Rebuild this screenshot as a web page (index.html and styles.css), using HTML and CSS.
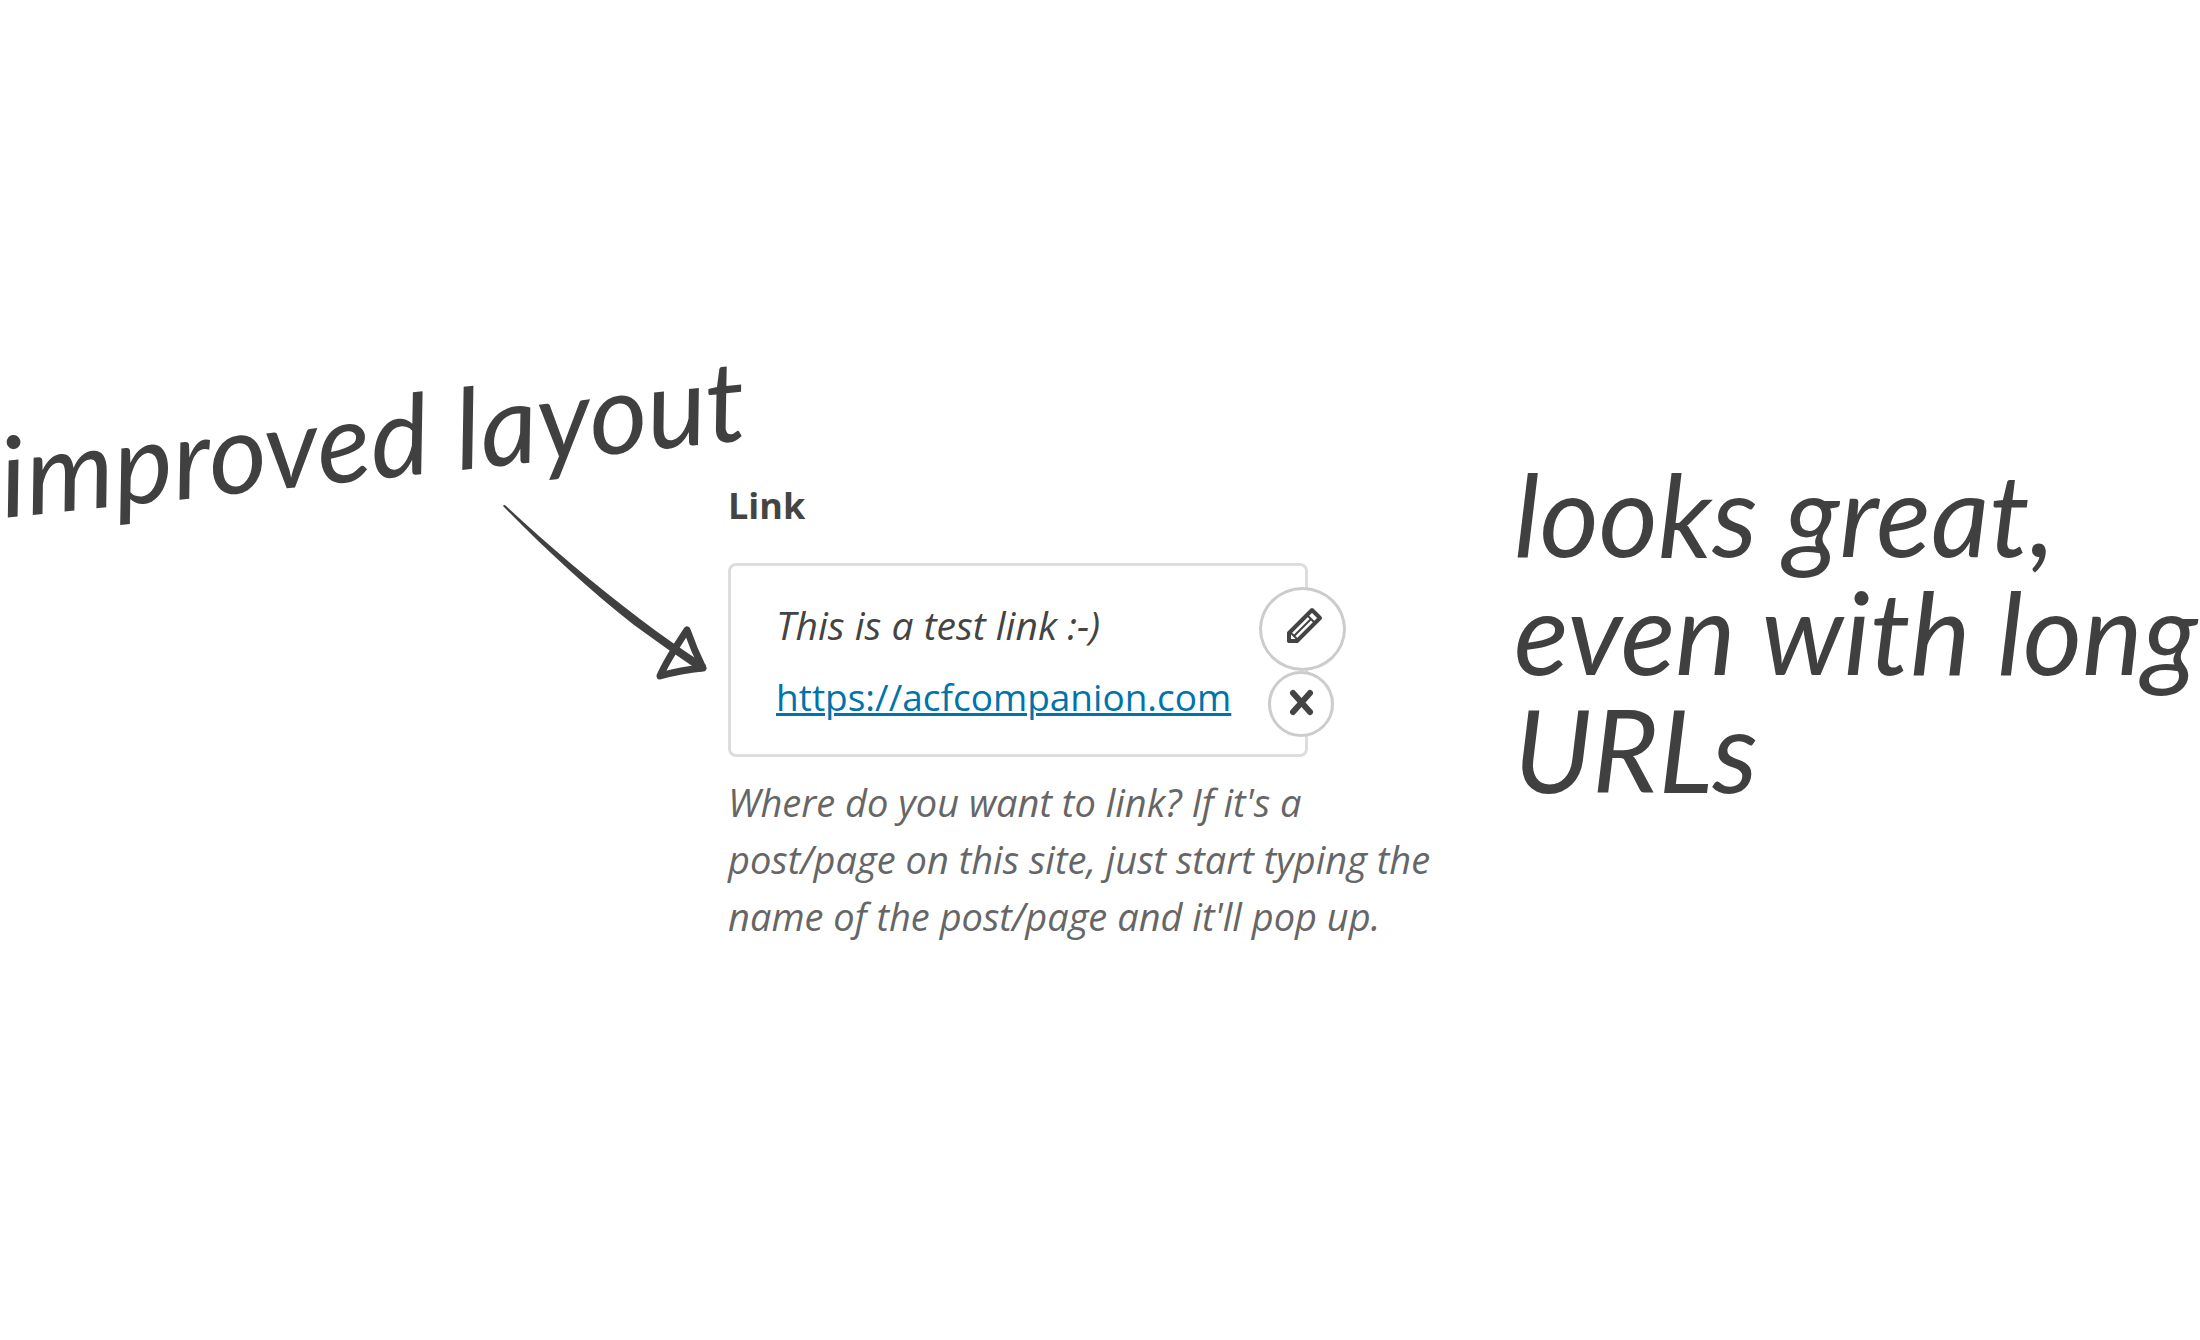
FILE: index.html
```html
<!DOCTYPE html>
<html lang="en">
<head>
<meta charset="utf-8">
<title>Link field</title>
<link rel="stylesheet" href="styles.css">
</head>
<body>
<main class="showcase">
  <aside class="callout callout-left">
    <p class="note note-tilted">improved layout</p>
    <svg class="arrow" viewBox="0 0 210 184" aria-hidden="true">
      <path class="arrow-shaft" d="M3 6 Q4 4 6 6 C48 45 90 81 140 119 Q170 142 206 165 L201 172 Q168 150 134 125 C88 89 44 48 3 6Z"/>
      <path class="arrow-head" d="M187 130 Q194 150 203 168 Q181 170 160 176 Q167 160 187 130Z"/>
    </svg>
  </aside>

  <section class="field">
    <h2 class="field-label">Link</h2>
    <div class="link-box">
      <p class="link-title">This is a test link :-)</p>
      <a class="link-url" href="https://acfcompanion.com">https://acfcompanion.com</a>
      <button class="round-button edit" type="button" aria-label="Edit link">
        <svg class="icon" viewBox="0 0 81 78" aria-hidden="true">
          <path class="pencil-outline" d="M27 51V43L50 20L58 28L35 51Z"/>
          <path class="pencil-detail" d="M45 25L53 33M28 42L36 50M32 46L49 29"/>
          <path class="pencil-tip" d="M26 46L32 52H26Z"/>
        </svg>
      </button>
      <button class="round-button remove" type="button" aria-label="Remove link">
        <svg class="icon" viewBox="0 0 60 60" aria-hidden="true">
          <path class="cross" d="M22 19L39 38M39 19L22 38"/>
        </svg>
      </button>
    </div>
    <p class="description">Where do you want to link? If it's a post/page on this site, just start typing the name of the post/page and it'll pop up.</p>
  </section>

  <aside class="callout callout-right">
    <p class="note">looks great,<br>even with long<br>URLs</p>
  </aside>
</main>
</body>
</html>
```
FILE: styles.css
```css
* {
  box-sizing: border-box;
}

body {
  margin: 0;
  background: #fff;
  color: #444;
  font-family: "Open Sans", "Noto Sans", sans-serif;
  overflow-x: hidden;
}

h2,
p {
  margin: 0;
}

.showcase {
  display: grid;
  grid-template-columns: 728fr 744fr 728fr;
  align-items: start;
  min-height: 100vh;
  padding-top: 416px;
}

.callout,
.field {
  min-width: 0;
}

/* Annotations */
.note {
  color: #404040;
  font: italic 114px/118px Lato, sans-serif;
  white-space: nowrap;
}

.callout-left {
  display: grid;
  grid-template-columns: minmax(0, 1fr);
  padding-left: 4px;
}

.callout-left > * {
  grid-area: 1 / 1;
}

.note-tilted {
  font-size: 112px;
  transform: rotate(-6deg);
  transform-origin: 0 102px;
}

.arrow {
  justify-self: end;
  width: 210px;
  margin: 84px 18px 0 0;
}

.arrow-shaft {
  fill: #404040;
}

.arrow-head {
  fill: none;
  stroke: #404040;
  stroke-width: 7px;
  stroke-linejoin: round;
}

.callout-right {
  padding: 38px 0 0 42px;
}

/* Link field */
.field {
  padding-top: 65px;
}

.field-label {
  margin-bottom: 32px;
  font-size: 36px;
  line-height: 50px;
}

.link-box {
  position: relative;
  display: flex;
  flex-direction: column;
  align-items: flex-start;
  gap: 21px;
  width: 78%;
  padding: 33px 45px 32px;
  border: 3px solid #ddd;
  border-radius: 8px;
}

.link-title {
  font-size: 39px;
  font-style: italic;
  line-height: 52px;
}

.link-url {
  color: #0073aa;
  font-size: 37px;
  line-height: 50px;
  text-decoration-thickness: 3px;
}

.round-button {
  position: absolute;
  padding: 0;
  border: 3px solid #ccc;
  border-radius: 50%;
  background: #fff;
}

.edit {
  top: 21px;
  right: -41px;
  width: 87px;
  height: 84px;
}

.remove {
  top: 105px;
  right: -29px;
  width: 66px;
  height: 66px;
}

.icon {
  display: block;
  width: 100%;
  height: 100%;
  fill: none;
  stroke: #444;
}

.pencil-outline {
  stroke-width: 4px;
  stroke-linejoin: round;
}

.pencil-detail {
  stroke-width: 2px;
}

.pencil-tip {
  fill: #444;
}

.cross {
  stroke-width: 6px;
  stroke-linecap: round;
}

.description {
  margin-top: 17px;
  color: #666;
  font-size: 38px;
  font-style: italic;
  line-height: 57px;
}
```
